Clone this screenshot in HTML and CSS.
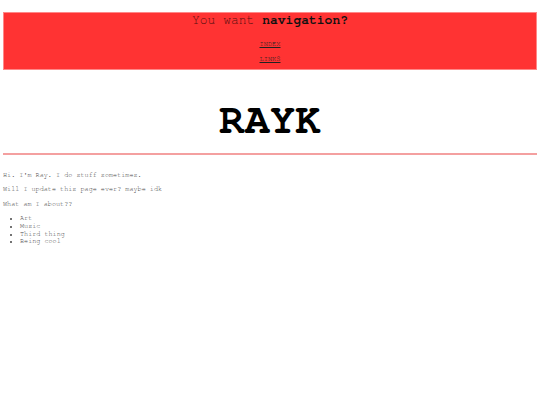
FILE: index.html
```html
<!DOCTYPE html>
<html>
<head>
<meta charset="utf-8">
<link rel="stylesheet" href="styles.css">
</head>
<body>
<div class="nav">
  <div class="nav-title">You want <b>navigation?</b></div>
  <a class="nav-link" href="#">INDEX</a>
  <a class="nav-link" href="#">LINKS</a>
</div>
<h1 class="title">RAYK</h1>
<hr class="rule">
<p class="text">Hi. I'm Ray. I do stuff sometimes.</p>
<p class="text">Will I update this page ever? maybe idk</p>
<p class="text">What am I about??</p>
<ul class="list">
  <li>Art</li>
  <li>Music</li>
  <li>Third thing</li>
  <li>Being cool</li>
</ul>
</body>
</html>
```
FILE: styles.css
```css
html, body {
  margin: 0;
  padding: 0;
  background: #fff;
}
body {
  padding: 12px 3px 0 3px;
  font-family: "Nimbus Mono PS", "Nimbus Mono L", "FreeMono", "Courier", "Courier New", "Liberation Mono", monospace;
  color: #444;
  font-size: 6.8px;
}
.nav {
  background: #ff3333;
  border: 1px solid #ff8888;
  display: flex;
  flex-direction: column;
  align-items: center;
  box-sizing: border-box;
  height: 58px;
}
.nav-title {
  font-size: 13px;
  line-height: 15px;
  color: #5a1010;
}
.nav-title b {
  color: #111;
}
.nav-link {
  font-size: 7px;
  color: #222;
  line-height: 8px;
  margin-top: 12px;
}
.nav-link + .nav-link {
  margin-top: 7px;
}
.title {
  font-size: 42px;
  font-weight: bold;
  color: #000;
  text-align: center;
  margin: 26px 0 0 0;
  line-height: 48px;
}
.rule {
  border: 0;
  height: 2px;
  background: #f4a0a0;
  margin: 9px 0 0 0;
}
.text {
  margin: 17px 0 0 0;
  line-height: 7.7px;
}
.text + .text {
  margin-top: 6.7px;
}
.list {
  margin: 6.7px 0 0 0;
  padding-left: 17px;
  line-height: 7.7px;
}
```
